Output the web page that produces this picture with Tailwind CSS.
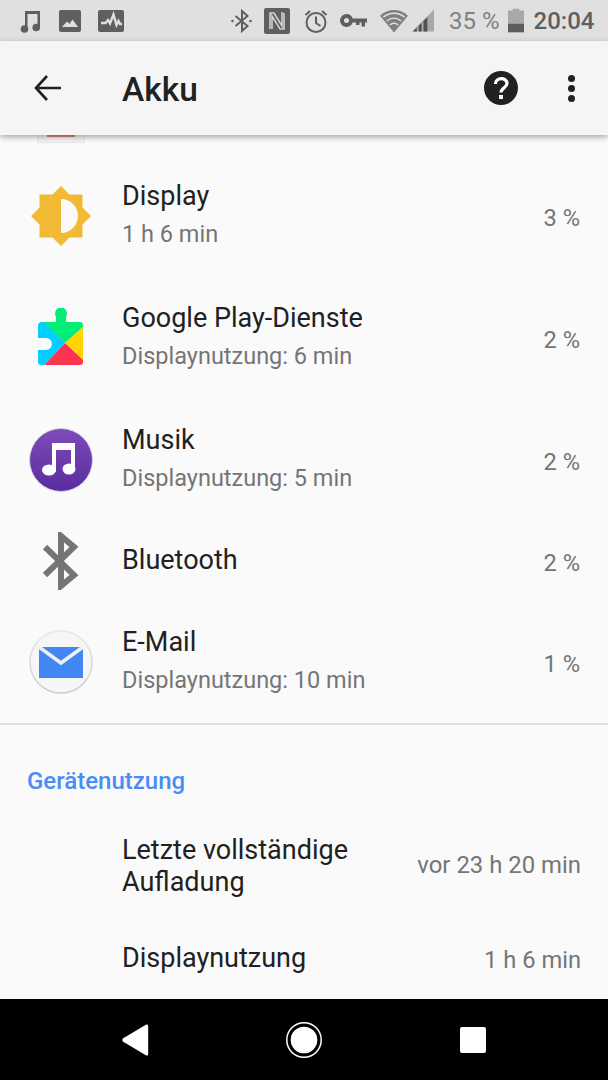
<!DOCTYPE html>
<html lang="de">
<head>
    <meta charset="UTF-8">
    <meta name="viewport" content="width=device-width, initial-scale=1.0">
    <title>Akku</title>
    <script src="https://cdn.jsdelivr.net/npm/@tailwindcss/browser@4"></script>
</head>
<body class="w-[608px] h-[1080px] overflow-hidden flex flex-col bg-[#fafafa] font-['Roboto',sans-serif]">

    <!-- status bar -->
    <div class="h-[41px] shrink-0 bg-[#e0e0e0] flex items-center text-[#666666]">
        <svg class="ml-[20px] w-[21px] h-[24px]" viewBox="0 0 21 24" fill="#5f5f5f"><path d="M5 2H20V19H17.500V5H7.500V21H5Z"/><circle cx="4.500" cy="20" r="3.800"/><circle cx="16.200" cy="18.500" r="3.800"/></svg>
        <svg class="ml-[18px] w-[22px] h-[22px]" viewBox="0 0 22 22"><rect width="22" height="22" rx="2" fill="#5f5f5f"/><path d="M3 17 8 11.500 10.500 14 13.500 9.500 19 17Z" fill="#e0e0e0"/></svg>
        <svg class="ml-[17px] w-[26px] h-[22px]" viewBox="0 0 26 22"><rect width="26" height="22" rx="2" fill="#5f5f5f"/><path d="M3 13H7.500L10 10 12 13.500 15.500 4.500 18.500 15 20.500 11 22 14H24" fill="none" stroke="#e0e0e0" stroke-width="2.400"/></svg>
        <svg class="ml-[107px] w-[21px] h-[24px]" viewBox="0 0 21 24" fill="none" stroke="#5f5f5f" stroke-width="2"><path d="M4.500 7 16.500 17 11 22V2L16.500 7 4.500 17"/><circle cx="1.500" cy="12" r="1.300" fill="#5f5f5f" stroke="none"/><circle cx="19.500" cy="12" r="1.300" fill="#5f5f5f" stroke="none"/></svg>
        <svg class="ml-[12px] w-[26px] h-[26px]" viewBox="0 0 26 26"><rect width="26" height="26" rx="2" fill="#5f5f5f"/><path d="M6 21V5H10L18 18V4M20 5V21H16L8 8V21" fill="none" stroke="#d0d0d0" stroke-width="1.600"/></svg>
        <svg class="ml-[14px] w-[24px] h-[24px]" viewBox="0 0 24 24" fill="none" stroke="#5f5f5f" stroke-width="2"><circle cx="12" cy="13.500" r="9.500"/><path d="M12 7.500V14L16.500 17M1.500 6 6 2M22.500 6 18 2"/></svg>
        <svg class="ml-[12px] w-[27px] h-[14px]" viewBox="0 0 27 14" fill="#5f5f5f"><path fill-rule="evenodd" d="M6.500 0A6.500 6.500 0 0 1 12.700 4.500H27V8.500H25V12.500H21.500V8.500H19.500V11H16V8.500H12.700A6.500 6.500 0 1 1 6.500 0ZM6.500 4A2.500 2.500 0 1 0 6.500 9 2.500 2.500 0 0 0 6.500 4Z"/></svg>
        <svg class="ml-[13px] w-[28px] h-[24px]" viewBox="0 0 29 24" fill="#808080"><path d="M0 6.500C8-1.500 21-1.500 29 6.500L14.500 24Z"/><path d="M3.500 8C10 2.500 19 2.500 25.500 8M7 12C11.500 8 17.500 8 22 12M10.300 16C13 13.800 16 13.800 18.700 16" fill="none" stroke="#e0e0e0" stroke-width="1.500"/></svg>
        <svg class="ml-[4px] w-[23px] h-[24px]" viewBox="0 0 24 24"><path d="M0 23 23 0V23Z" fill="#a8a8a8"/><path d="M1 23 5 19V23ZM7 23V17L10 14V23ZM12 23V12L16 8V23Z" fill="#505050"/></svg>
        <span class="ml-[14px] text-[24px] leading-none text-[#808080]">35 %</span>
        <svg class="ml-[8px] w-[16px] h-[25px]" viewBox="0 0 17 25"><path d="M5 0H12V2H17V25H0V2H5Z" fill="#a8a8a8"/><rect y="16" width="17" height="9" fill="#5c5c5c"/></svg>
        <span class="ml-[10px] text-[24px] leading-none font-medium text-[#5f5f5f]">20:04</span>
    </div>

    <!-- toolbar -->
    <header class="relative z-10 h-[94px] shrink-0 bg-[#f5f5f5] shadow-[0_2px_6px_rgba(0,0,0,0.35)] flex items-center text-[#212121]">
        <svg class="ml-[34px] w-[28px] h-[26px]" viewBox="0 0 28 26" fill="none" stroke="#212121" stroke-width="2.600"><path d="M27 13H2M13 1 2 13 13 25"/></svg>
        <h1 class="ml-[60px] mt-[4px] text-[33.500px] leading-none font-medium">Akku</h1>
        <svg class="ml-auto w-[34px] h-[34px]" viewBox="0 0 34 34"><circle cx="17" cy="17" r="17" fill="#212121"/><path d="M11.500 13C11.500 6 23 6 23 12.500 23 16.500 17 17 17 21.500" fill="none" stroke="#ffffff" stroke-width="3.200"/><rect x="15" y="24" width="4" height="4" fill="#ffffff"/></svg>
        <div class="ml-[50px] mr-[33px] flex flex-col gap-[3px]">
            <div class="w-[7px] h-[7px] rounded-full bg-[#212121]"></div>
            <div class="w-[7px] h-[7px] rounded-full bg-[#212121]"></div>
            <div class="w-[7px] h-[7px] rounded-full bg-[#212121]"></div>
        </div>
    </header>

    <main class="flex-1 min-h-0 overflow-hidden">
        <!-- row scrolled under the toolbar -->
        <div class="h-[20px] overflow-hidden relative">
            <div class="absolute left-[37px] top-[-30px] w-[48px] h-[38px] bg-[#f4f4f4] border border-[#e6e6e6] rounded-[2px] flex justify-center">
                <div class="mt-[25px] w-[28px] h-[6px] bg-[#d98a68]"></div>
            </div>
        </div>

        <div class="h-[122px] flex items-center">
            <div class="w-[122px] shrink-0 flex justify-center">
                <svg class="w-[60px] h-[60px]" viewBox="0 0 60 60"><path d="M30 0 38.500 8.500H51.500V21.500L60 30 51.500 38.500V51.500H38.500L30 60 21.500 51.500H8.500V38.500L0 30 8.500 21.500V8.500H21.500Z" fill="#f2b935"/><path d="M30 13A17 17 0 0 1 30 47Z" fill="#fafafa"/></svg>
            </div>
            <div class="flex-1 mb-[2px]">
                <p class="text-[27px] leading-[38px] text-[#212121]">Display</p>
                <p class="text-[23.500px] leading-[38px] text-[#757575]">1 h 6 min</p>
            </div>
            <span class="mr-[28px] mt-[6px] text-[23.700px] text-[#757575]">3 %</span>
        </div>

        <div class="h-[122px] flex items-center">
            <div class="w-[122px] shrink-0 flex justify-center">
                <svg class="w-[46px] h-[60px]" viewBox="0 0 46 60">
                    <circle cx="23" cy="5.500" r="6" fill="#00ee76"/>
                    <rect x="18" y="8" width="10" height="8" fill="#00ee76"/>
                    <path d="M5 14H42Q45 14 45 18V19L27 35Z" fill="#00ee76"/>
                    <path d="M45 19V52L27 35Z" fill="#ffd400"/>
                    <path d="M27 35 45 52V54Q45 57 42 57H6Z" fill="#fb3450"/>
                    <path d="M4 14H6L27 35 6 57H3Q0 57 0 54V42H8A6 6 0 0 0 8 30H0V18Q0 14 4 14Z" fill="#00cfff"/>
                </svg>
            </div>
            <div class="flex-1 mb-[2px]">
                <p class="text-[27px] leading-[38px] text-[#212121]">Google Play-Dienste</p>
                <p class="text-[23.500px] leading-[38px] text-[#757575]">Displaynutzung: 6 min</p>
            </div>
            <span class="mr-[28px] mt-[6px] text-[23.700px] text-[#757575]">2 %</span>
        </div>

        <div class="h-[122px] flex items-center">
            <div class="w-[122px] shrink-0 flex justify-center">
                <svg class="w-[64px] h-[64px]" viewBox="0 0 64 64">
                    <defs><linearGradient id="musik" x1="0" y1="0" x2="0" y2="1"><stop offset="0" stop-color="#7e4cb8"/><stop offset="1" stop-color="#5a2ca0"/></linearGradient></defs>
                    <circle cx="32" cy="32" r="31.500" fill="url(#musik)" stroke="#d8d0e4"/>
                    <path d="M23 15H46V42H42V22H27V44H23Z" fill="#ffffff"/>
                    <ellipse cx="20" cy="42" rx="7" ry="5.500" fill="#ffffff"/>
                    <ellipse cx="40" cy="41" rx="6.500" ry="5.500" fill="#ffffff"/>
                </svg>
            </div>
            <div class="flex-1 mb-[2px]">
                <p class="text-[27px] leading-[38px] text-[#212121]">Musik</p>
                <p class="text-[23.500px] leading-[38px] text-[#757575]">Displaynutzung: 5 min</p>
            </div>
            <span class="mr-[28px] mt-[6px] text-[23.700px] text-[#757575]">2 %</span>
        </div>

        <div class="h-[80px] flex items-center">
            <div class="w-[122px] shrink-0 flex justify-center">
                <svg class="w-[38px] h-[58px]" viewBox="0 0 38 58" fill="none" stroke="#757575" stroke-width="6"><path d="M3 15 32 43 19 54V4L32 15 3 43"/></svg>
            </div>
            <p class="flex-1 mb-[2px] text-[27px] text-[#212121]">Bluetooth</p>
            <span class="mr-[28px] mt-[6px] text-[23.700px] text-[#757575]">2 %</span>
        </div>

        <div class="h-[122px] flex items-center">
            <div class="w-[122px] shrink-0 flex justify-center">
                <svg class="w-[64px] h-[64px]" viewBox="0 0 64 64">
                    <defs><linearGradient id="mailring" x1="0" y1="0" x2="0" y2="1"><stop offset="0" stop-color="#e8e8e8"/><stop offset="1" stop-color="#cccccc"/></linearGradient></defs>
                    <circle cx="32" cy="32" r="31" fill="#f6f6f6" stroke="url(#mailring)" stroke-width="1.500"/>
                    <rect x="10" y="17" width="44" height="31" fill="#4288f4"/>
                    <path d="M10 17 32 33 54 17" fill="none" stroke="#f0f0f0" stroke-width="3.500"/>
                </svg>
            </div>
            <div class="flex-1 mb-[2px]">
                <p class="text-[27px] leading-[38px] text-[#212121]">E-Mail</p>
                <p class="text-[23.500px] leading-[38px] text-[#757575]">Displaynutzung: 10 min</p>
            </div>
            <span class="mr-[28px] mt-[6px] text-[23.700px] text-[#757575]">1 %</span>
        </div>

        <div class="border-t-2 border-[#e0e0e0] pt-[40px] pl-[27px]">
            <h2 class="text-[24px] leading-[32px] font-medium text-[#4a8cf7]">Gerätenutzung</h2>
        </div>

        <div class="mt-[37px] flex items-center">
            <p class="ml-[122px] flex-1 text-[27px] leading-[32px] text-[#212121]">Letzte vollständige<br>Aufladung</p>
            <span class="mr-[27px] text-[23.900px] text-[#757575]">vor 23 h 20 min</span>
        </div>

        <div class="mt-[39px] flex items-center">
            <p class="ml-[122px] flex-1 text-[27px] leading-[32px] text-[#212121]">Displaynutzung</p>
            <span class="mr-[27px] mt-[6px] text-[23.700px] text-[#757575]">1 h 6 min</span>
        </div>
    </main>

    <!-- navigation bar -->
    <nav class="h-[81px] shrink-0 bg-black flex items-center">
        <svg class="ml-[121px] w-[29px] h-[32px]" viewBox="0 0 29 34"><path d="M26 .5Q28 0 28 2V32Q28 34 26 33.500L1 18.500Q0 17 1 15.500Z" fill="#ffffff"/></svg>
        <svg class="ml-[136px] w-[36px] h-[36px]" viewBox="0 0 36 36"><circle cx="18" cy="18" r="17.200" fill="none" stroke="#ffffff" stroke-width="1.500"/><circle cx="18" cy="18" r="13.300" fill="#ffffff"/></svg>
        <div class="ml-[138px] w-[26px] h-[26px] rounded-[2px] bg-white"></div>
    </nav>

</body>
</html>
